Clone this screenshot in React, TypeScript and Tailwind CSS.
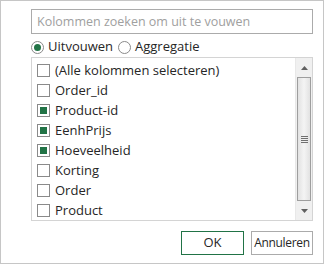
const items = [
  { label: '(Alle kolommen selecteren)', checked: false },
  { label: 'Order_id', checked: false },
  { label: 'Product-id', checked: true },
  { label: 'EenhPrijs', checked: true },
  { label: 'Hoeveelheid', checked: true },
  { label: 'Korting', checked: false },
  { label: 'Order', checked: false },
  { label: 'Product', checked: false },
];

const Checkbox = ({ checked }: { checked: boolean }) => (
  <span className="flex h-[13px] w-[13px] shrink-0 items-center justify-center border border-[#8a8a8a] bg-white">
    {checked && <span className="h-[7px] w-[7px] bg-[#217346]" />}
  </span>
);

const Radio = ({ checked }: { checked: boolean }) => (
  <span className="flex h-[13px] w-[13px] shrink-0 items-center justify-center rounded-full border border-[#8a8a8a] bg-white">
    {checked && <span className="h-[7px] w-[7px] rounded-full bg-[#217346]" />}
  </span>
);

export default function App() {
  return (
    <div
      className="h-[264px] w-[324px] border border-[#c6c6c6] bg-white text-[13px] text-[#262626]"
      style={{ fontFamily: '"Open Sans", "Noto Sans", sans-serif' }}
    >
      <div className="flex flex-col pl-[30px] pr-[10px] pt-[8px]">
        <input
          className="h-[25px] w-full border border-[#ababab] px-[5px] text-[12.5px] outline-none placeholder:text-[#a0a0a0]"
          placeholder="Kolommen zoeken om uit te vouwen"
        />
        <div className="mt-[6px] flex h-[14px] items-center">
          <Radio checked />
          <span className="ml-[4px]">Uitvouwen</span>
          <span className="ml-[5px]"><Radio checked={false} /></span>
          <span className="ml-[4px]">Aggregatie</span>
        </div>
        <div className="mt-[3px] flex h-[164px] w-full border border-[#d4d4d4]">
          <div className="flex flex-1 flex-col pt-[3px]">
            {items.map((it) => (
              <div key={it.label} className="flex h-[20px] items-center pl-[5px]">
                <Checkbox checked={it.checked} />
                <span className="ml-[5px] leading-none">{it.label}</span>
              </div>
            ))}
          </div>
          <div className="flex w-[17px] flex-col border-l border-[#e8e8e8] bg-[#f0f0f0]">
            <div className="flex h-[19px] items-center justify-center">
              <svg width="7" height="4" viewBox="0 0 7 4"><path d="M3.5 0L7 4H0z" fill="#606060" /></svg>
            </div>
            <div className="mx-[1px] flex flex-1 items-center justify-center border border-[#9e9e9e] bg-gradient-to-r from-[#e2e2e2] via-[#f4f4f4] to-[#e2e2e2]">
              <div className="flex flex-col gap-[1px]">
                <span className="h-[1px] w-[7px] bg-[#707070]" />
                <span className="h-[1px] w-[7px] bg-[#707070]" />
                <span className="h-[1px] w-[7px] bg-[#707070]" />
                <span className="h-[1px] w-[7px] bg-[#707070]" />
              </div>
            </div>
            <div className="flex h-[19px] items-center justify-center">
              <svg width="7" height="4" viewBox="0 0 7 4"><path d="M0 0H7L3.5 4z" fill="#606060" /></svg>
            </div>
          </div>
        </div>
        <div className="mt-[10px] flex justify-end gap-[7px]">
          <button className="h-[24px] w-[63px] border border-[#217346] bg-white text-[13px]">OK</button>
          <button className="h-[24px] w-[62px] border border-[#ababab] bg-white text-[12px] tracking-[-0.3px]">Annuleren</button>
        </div>
      </div>
    </div>
  );
}
